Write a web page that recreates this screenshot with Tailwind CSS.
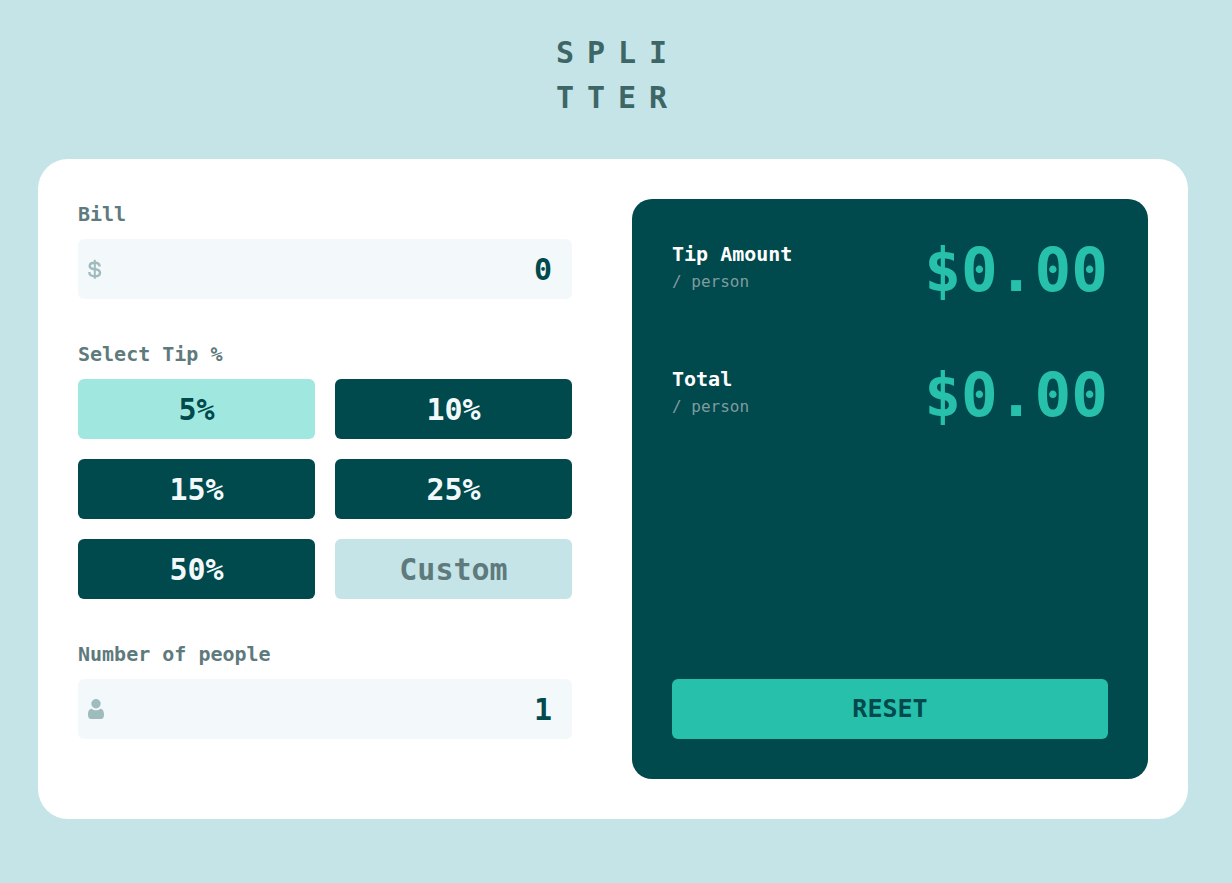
<!DOCTYPE html>
<html lang="en">
<head>
<meta charset="utf-8">
<meta name="viewport" content="width=device-width, initial-scale=1">
<title>Splitter</title>
<script src="https://cdn.jsdelivr.net/npm/@tailwindcss/browser@4"></script>
</head>
<body class="min-h-screen bg-[#c5e4e7] pt-[30px] pb-10 pl-[38px] pr-[44px] font-['DejaVu_Sans_Mono',monospace] font-bold text-[#00494d]">
<header class="mb-[39px] flex justify-center">
  <h1 class="pl-2.5 text-center text-[30px] leading-[45px] tracking-[13px] text-[#3d6666]">SPLI<br>TTER</h1>
</header>
<main class="mx-auto grid max-w-[1150px] grid-cols-[494fr_516fr] gap-[60px] rounded-[30px] bg-white p-10">
  <form class="flex flex-col gap-10">
    <div class="flex flex-col gap-2.5">
      <label for="bill" class="text-xl leading-[30px] text-[#5e7a7d]">Bill</label>
      <div class="flex h-[60px] items-center rounded-md bg-[#f3f9fb] px-2.5">
        <svg class="h-5 w-[14px] shrink-0" viewBox="0 0 14 20" fill="none" stroke="#9ebbbd" stroke-width="2.400" aria-hidden="true"><path d="M11.500 7.500V7C11.500 4.600 9.600 3.700 6.800 3.700S1.700 4.900 1.700 6.900C1.700 9.200 3.800 9.800 6.800 10.200s5.200 1.200 5.200 3.500-2.200 3.500-5.200 3.500S1.400 16 1.400 13.700v-.7"/><path d="M6.800 .8v19" stroke-width="2"/></svg>
        <input id="bill" type="text" inputmode="decimal" value="0" class="h-full w-full min-w-0 bg-transparent pr-2.5 text-right text-[30px] outline-none">
      </div>
    </div>
    <fieldset>
      <legend class="mb-2.5 text-xl leading-[30px] text-[#5e7a7d]">Select Tip %</legend>
      <div class="grid grid-cols-2 gap-5 text-[30px] text-[#f3f9fb]">
        <button type="button" class="h-[60px] rounded-md bg-[#a0e8df] text-[#00494d]">5%</button>
        <button type="button" class="h-[60px] rounded-md bg-[#00494d]">10%</button>
        <button type="button" class="h-[60px] rounded-md bg-[#00494d]">15%</button>
        <button type="button" class="h-[60px] rounded-md bg-[#00494d]">25%</button>
        <button type="button" class="h-[60px] rounded-md bg-[#00494d]">50%</button>
        <input type="text" aria-label="Custom tip" placeholder="Custom" class="h-[60px] w-full min-w-0 rounded-md bg-[#c5e4e7] text-center text-[#00494d] placeholder:text-[#5e7a7d]">
      </div>
    </fieldset>
    <div class="flex flex-col gap-2.5">
      <label for="people" class="text-xl leading-[30px] text-[#5e7a7d]">Number of people</label>
      <div class="flex h-[60px] items-center rounded-md bg-[#f3f9fb] px-2.5">
        <svg class="h-5 w-4 shrink-0" viewBox="0 0 16 20" fill="#9ebbbd" aria-hidden="true"><circle cx="8" cy="4.700" r="4.700"/><path d="M3.700 9.800C5 10.800 6.400 11.300 8 11.300s3-.5 4.300-1.500C14.900 9.900 16 12.400 16 15.500 16 18.800 15 20 12.800 20H3.200C1 20 0 18.800 0 15.500 0 12.400 1.100 9.900 3.700 9.800Z"/></svg>
        <input id="people" type="text" inputmode="numeric" value="1" class="h-full w-full min-w-0 bg-transparent pr-2.5 text-right text-[30px] outline-none">
      </div>
    </div>
  </form>
  <section class="flex min-h-[580px] flex-col gap-16 rounded-[20px] bg-[#00494d] p-10">
    <div class="flex justify-between">
      <h2 class="text-xl leading-[30px] text-white">Tip Amount<span class="block text-base leading-[26px] font-normal text-[#7f9c9f]">/ person</span></h2>
      <output class="text-[61px] leading-[61px] text-[#26c0ab]">$0.00</output>
    </div>
    <div class="flex justify-between">
      <h2 class="text-xl leading-[30px] text-white">Total<span class="block text-base leading-[26px] font-normal text-[#7f9c9f]">/ person</span></h2>
      <output class="text-[61px] leading-[61px] text-[#26c0ab]">$0.00</output>
    </div>
    <button type="button" class="mt-auto h-[60px] rounded-md bg-[#26c0ab] text-[25px]">RESET</button>
  </section>
</main>
</body>
</html>
